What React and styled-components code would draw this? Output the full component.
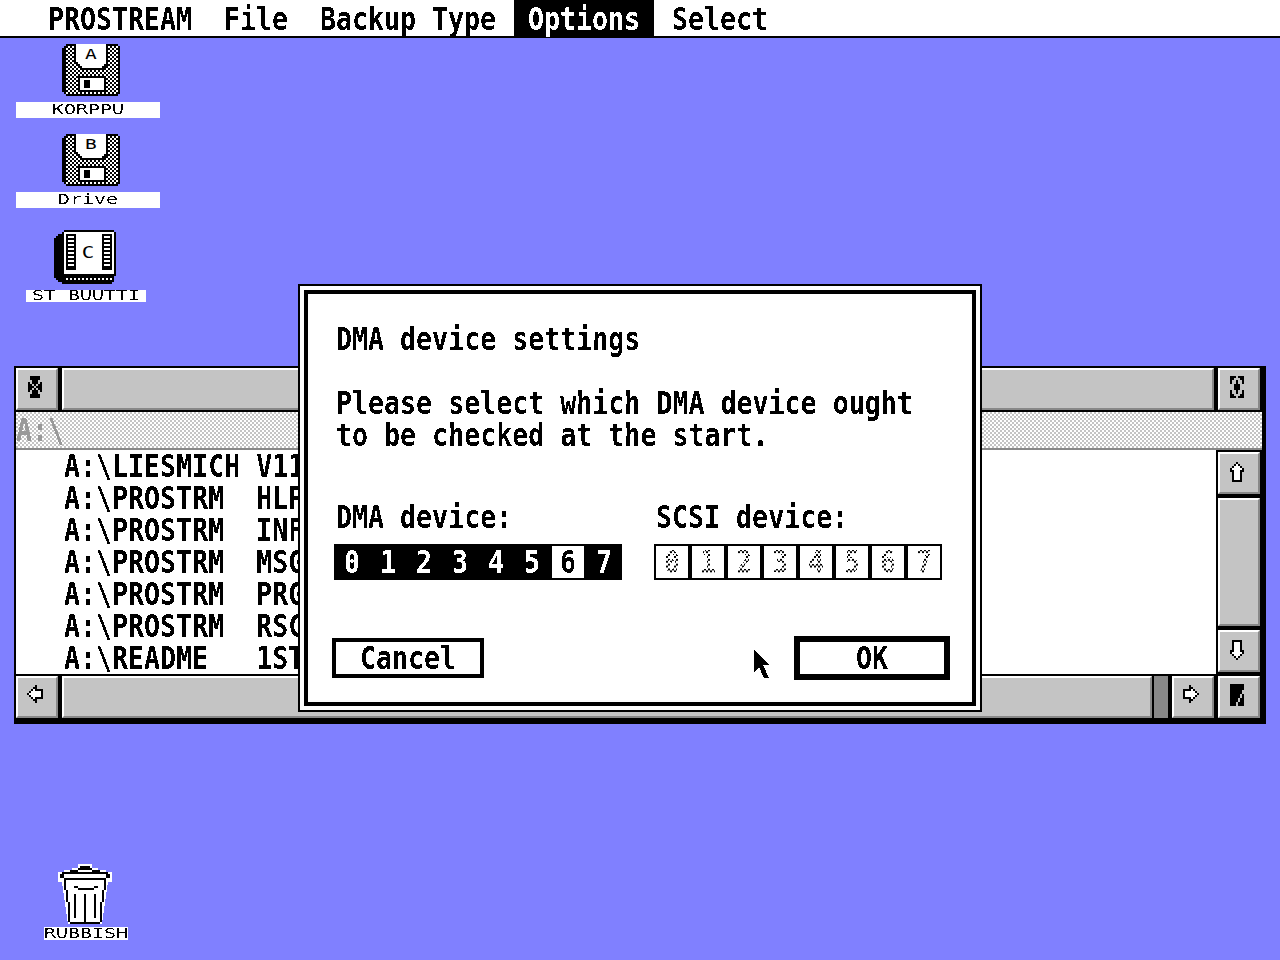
import React from "react";
import styled, { createGlobalStyle, css } from "styled-components";

const GREY = "#c4c4c4";
const DARK = "#888888";

const Global = createGlobalStyle`
  html, body {
    margin: 0;
    padding: 0;
    background: #8080ff;
  }
`;

// text is thresholded to hard edges so it reads as a 1-bit bitmap font
const systemFont = css`
  font-family: "DejaVu Sans Mono", "Liberation Mono", monospace;
  font-size: 26.6px;
  font-weight: bold;
  line-height: 26px;
  letter-spacing: 0.01px;
  white-space: pre;
  transform: scaleY(1.2);
  filter: url(#hard);
`;

const Screen = styled.div`
  width: 1280px;
  height: 960px;
  display: flex;
  flex-direction: column;
  overflow: hidden;
`;

const MenuBar = styled.div`
  height: 36px;
  flex: none;
  display: flex;
  padding-left: 32px;
  background: #fff;
  border-bottom: 2px solid #000;
`;

const MenuTitle = styled.div`
  width: ${(p) => p.$chars * 16 + 32}px;
  height: 36px;
  box-sizing: border-box;
  padding: 0 2px;
`;

const MenuInner = styled.div`
  height: 36px;
  box-sizing: border-box;
  padding-top: 1px;
  display: flex;
  justify-content: center;
  align-items: center;
  background: ${(p) => (p.$active ? "#000" : "transparent")};
`;

const MenuText = styled.span`
  ${systemFont}
  color: ${(p) => (p.$active ? "#fff" : "#000")};
`;

const Desktop = styled.div`
  position: relative;
  flex: 1;
  background: #8080ff;
`;

const DeskIcon = styled.div`
  position: absolute;
  left: ${(p) => p.$x}px;
  top: ${(p) => p.$y}px;
  width: ${(p) => p.$w}px;
  display: flex;
  flex-direction: column;
  align-items: center;
  gap: ${(p) => p.$gap}px;
  svg {
    display: block;
    margin-left: ${(p) => p.$shift}px;
    shape-rendering: crispEdges;
  }
`;

const DeskLabel = styled.div`
  width: 100%;
  height: ${(p) => p.$h}px;
  background: #fff;
  display: flex;
  justify-content: center;
  align-items: center;
`;

const DeskLabelText = styled.span`
  font-family: "DejaVu Sans Mono", monospace;
  font-size: 19.9px;
  line-height: 12px;
  color: #000;
  white-space: pre;
  transform: scaleY(0.72);
  filter: url(#hard);
`;

const Win = styled.div`
  position: absolute;
  left: 14px;
  top: 328px;
  width: 1252px;
  height: 358px;
  box-sizing: border-box;
  padding: 2px 6px 6px 2px;
  background: #000;
  display: flex;
  flex-direction: column;
`;

const WinRow = styled.div`
  height: 42px;
  flex: none;
  display: flex;
  gap: 4px;
`;

const Gadget = styled.div`
  flex: ${(p) => (p.$grow ? "1" : "none")};
  width: ${(p) => (p.$grow ? "auto" : p.$w || 42)}px;
  height: ${(p) => p.$h || 42}px;
  box-sizing: border-box;
  background: ${GREY};
  border-top: 2px solid #fff;
  border-left: 2px solid #fff;
  border-bottom: 2px solid ${DARK};
  border-right: 2px solid ${DARK};
  display: flex;
  align-items: center;
  justify-content: center;
  svg {
    display: block;
    shape-rendering: crispEdges;
    margin: 0 4px ${(p) => p.$lift ?? 4}px 0;
  }
`;

const Slider = styled.div`
  width: 14px;
  height: 42px;
  flex: none;
  margin-left: -2px;
  background: ${DARK};
`;

const InfoBar = styled.div`
  height: 38px;
  flex: none;
  box-sizing: border-box;
  margin: 2px -2px 0 0;
  padding-top: 5px;
  border-bottom: 2px solid ${DARK};
  background-color: #fff;
  background-image: conic-gradient(${GREY} 25%, #fff 0 50%, ${GREY} 0 75%, #fff 0);
  background-size: 4px 4px;
`;

const InfoText = styled.div`
  ${systemFont}
  color: #999;
  width: 60px;
`;

const WinBody = styled.div`
  height: 224px;
  flex: none;
  display: flex;
  gap: 2px;
  margin-bottom: 2px;
`;

const FileList = styled.div`
  flex: 1;
  box-sizing: border-box;
  background: #fff;
  padding: 3px 0 0 48px;
  display: flex;
  flex-direction: column;
  gap: 6px;
`;

const FileRow = styled.div`
  ${systemFont}
  height: 26px;
  color: #000;
`;

const ScrollCol = styled.div`
  width: 42px;
  flex: none;
  padding-top: 2px;
  display: flex;
  flex-direction: column;
  gap: 4px;
`;

const Dialog = styled.div`
  position: absolute;
  left: 298px;
  top: 246px;
  width: 684px;
  height: 428px;
  box-sizing: border-box;
  border: 2px solid #000;
  padding: 4px;
  background: #fff;
`;

const DialogInner = styled.div`
  height: 100%;
  box-sizing: border-box;
  border: 4px solid #000;
  padding: 32px 22px 0 28px;
`;

const Line = styled.div`
  ${systemFont}
  height: 26px;
  color: #000;
  margin-bottom: ${(p) => 6 + (p.$after || 0)}px;
`;

const Fields = styled.div`
  display: flex;
  margin-top: 56px;
`;

const Field = styled.div`
  width: 320px;
  flex: none;
`;

const DeviceBox = styled.div`
  margin: 14px 0 0 -2px;
  width: 288px;
  box-sizing: border-box;
  padding: 2px;
  background: #000;
  display: flex;
  gap: 4px;
`;

const DeviceCell = styled.div`
  width: 32px;
  height: 32px;
  background: ${(p) => (p.$on ? "#000" : "#fff")};
  display: flex;
  justify-content: center;
  align-items: center;
`;

const DeviceDigit = styled.span`
  ${systemFont}
  color: ${(p) => (p.$on ? "#fff" : "#000")};
  ${(p) =>
    p.$off &&
    css`
      mask: conic-gradient(#000 25%, transparent 0 50%, #000 0 75%, transparent 0) 0 0 / 4px 4px;
    `}
`;

const Buttons = styled.div`
  display: flex;
  justify-content: space-between;
  align-items: center;
  height: 44px;
  margin: 56px 0 0 -4px;
`;

const Button = styled.div`
  width: ${(p) => p.$w}px;
  height: ${(p) => (p.$def ? 44 : 40)}px;
  box-sizing: border-box;
  border: ${(p) => (p.$def ? 6 : 4)}px solid #000;
  background: #fff;
  display: flex;
  justify-content: center;
  align-items: center;
`;

const ButtonText = styled.span`
  ${systemFont}
  color: #000;
`;

const Pointer = styled.svg`
  position: absolute;
  left: 754px;
  top: 612px;
  shape-rendering: crispEdges;
`;

const HiddenDefs = styled.svg`
  position: absolute;
  width: 0;
  height: 0;
`;

// rows of cells, one cell is 2x2 screen pixels
const Bitmap = ({ rows }) => {
  let black = "";
  let white = "";
  rows.forEach((row, y) => {
    [...row].forEach((c, x) => {
      if (c === "#") black += `M${x} ${y}h1v1h-1z`;
      if (c === "w") white += `M${x} ${y}h1v1h-1z`;
    });
  });
  return (
    <svg width={rows[0].length * 2} height={rows.length * 2} viewBox={`0 0 ${rows[0].length} ${rows.length}`}>
      <path d={white} fill="#fff" />
      <path d={black} fill="#000" />
    </svg>
  );
};

const CLOSER = [".#####.", ".#####.", "..###..", "#.###.#", "##.#.##", "###.###", "##.#.##", "#.###.#", "..###..", ".#####.", ".#####."];
const FULLER = ["###.###", "##...##", "#..#..#", "#..#..#", "..###..", "..###..", "..###..", "#..#..#", "#..#..#", "##...##", "###.###"];
const UP = ["...#...", "..#w#..", ".#www#.", "#wwwww#", "##www##", ".#www#.", ".#www#.", ".#www#.", ".#www#.", ".#####."];
const DOWN = [...UP].reverse();
const LEFT = ["....#...", "...##...", "..#w####", ".#wwwww#", "#wwwwww#", ".#wwwww#", "..#w####", "...##...", "....#..."];
const RIGHT = LEFT.map((r) => [...r].reverse().join(""));
const SIZER = ["#######", "#######", "#######", "######.", "######.", "#####.#", "#####.#", "####.##", "####.##", "###.###", "###.###"];

const Floppy = ({ letter }) => (
  <svg width="58" height="52" viewBox="0 0 29 26">
    <defs>
      <pattern id={`check${letter}`} width="2" height="2" patternUnits="userSpaceOnUse">
        <rect width="2" height="2" fill="#000" />
        <rect width="1" height="1" fill="#fff" />
        <rect x="1" y="1" width="1" height="1" fill="#fff" />
      </pattern>
    </defs>
    <path d="M2 0h26v1h1v24h-1v1H2v-1H1v-1H0V2h1V1h1z" fill="#000" />
    <rect x="2" y="1" width="26" height="24" fill={`url(#check${letter})`} />
    <path d="M6 0h17v11h-1v1h-1v1H9v-1H8v-1H7v-1H6z" fill="#000" />
    <path d="M7 0h15v10h-1v1h-1v1H10v-1H9v-1H8V9H7z" fill="#fff" />
    <rect x="8" y="16" width="14" height="8" fill="#000" />
    <rect x="9" y="17" width="12" height="6" fill="#fff" />
    <rect x="11" y="18" width="3" height="4" fill="#000" />
    <rect x="2" y="25" width="26" height="1" fill="#000" />
    <text
      x="14.5"
      y="7.5"
      textAnchor="middle"
      fontFamily="DejaVu Sans Mono"
      fontSize="7.5"
      fill="#000"
      transform="translate(14.5 7.5) scale(1.3 0.9) translate(-14.5 -7.5)"
    >
      {letter}
    </text>
  </svg>
);

const Chip = () => (
  <svg width="62" height="54" viewBox="0 0 31 27">
    <path d="M5 0h25v1h1v22h-1v3h-1v1H4v-1H2v-1H1v-1H0V4h1V3h1V2h2V1h1z" fill="#000" />
    <rect x="5" y="1" width="25" height="21" fill="#fff" />
    <rect x="5" y="24" width="24" height="1" fill="#fff" />
    {[5, 7, 9, 11, 13, 15, 17, 19, 21, 23, 25, 27].map((x) => (
      <rect key={x} x={x} y="24" width="1" height="1" fill="#000" />
    ))}
    <rect x="6" y="2" width="5" height="18" fill="#000" />
    <rect x="24" y="2" width="5" height="18" fill="#000" />
    {[3, 5, 7, 9, 11, 13, 15, 17].map((y) => (
      <React.Fragment key={y}>
        <rect x="7" y={y} width="3" height="1" fill="#fff" />
        <rect x="25" y={y} width="3" height="1" fill="#fff" />
      </React.Fragment>
    ))}
    <text
      x="17"
      y="14"
      textAnchor="middle"
      fontFamily="DejaVu Sans Mono"
      fontSize="8"
      fill="#000"
      transform="translate(17 14) scale(1.3 1) translate(-17 -14)"
    >
      C
    </text>
  </svg>
);

const Trash = () => (
  <svg width="54" height="62" viewBox="0 0 27 31">
    <path d="M10 0h7v2h3v1h4v1h3v5h-2l-3 21H5L2 9H0V4h3V3h4V2h3z" fill="#fff" />
    <g fill="#000">
      <rect x="11" y="1" width="5" height="1" />
      <rect x="10" y="2" width="7" height="1" />
      <rect x="6" y="3" width="4" height="1" />
      <rect x="17" y="3" width="4" height="1" />
      <rect x="2" y="4" width="23" height="1" />
      <rect x="1" y="5" width="2" height="2" />
      <rect x="24" y="5" width="2" height="2" />
      <rect x="3" y="7" width="21" height="1" />
      <rect x="3" y="8" width="1" height="5" />
      <rect x="23" y="8" width="1" height="5" />
      <rect x="4" y="13" width="1" height="6" />
      <rect x="22" y="13" width="1" height="6" />
      <rect x="5" y="19" width="1" height="10" />
      <rect x="21" y="19" width="1" height="10" />
      <rect x="6" y="29" width="15" height="1" />
      <rect x="8" y="11" width="2" height="1" />
      <rect x="18" y="11" width="2" height="1" />
      <rect x="10" y="12" width="8" height="1" />
      <rect x="8" y="15" width="1" height="12" />
      <rect x="13" y="15" width="1" height="14" />
      <rect x="18" y="15" width="1" height="12" />
    </g>
  </svg>
);

const FILES = [
  "A:\\LIESMICH V11",
  "A:\\PROSTRM  HLP",
  "A:\\PROSTRM  INF",
  "A:\\PROSTRM  MSG",
  "A:\\PROSTRM  PRG",
  "A:\\PROSTRM  RSC",
  "A:\\README   1ST",
];
const MENUS = ["PROSTREAM", "File", "Backup Type", "Options", "Select"];
const DIGITS = [0, 1, 2, 3, 4, 5, 6, 7];

export default function App() {
  return (
    <Screen>
      <Global />
      <HiddenDefs aria-hidden="true">
        <filter id="hard" x="-5%" y="-5%" width="110%" height="110%" colorInterpolationFilters="sRGB">
          <feComponentTransfer>
            <feFuncA type="discrete" tableValues="0 1" />
          </feComponentTransfer>
        </filter>
      </HiddenDefs>
      <MenuBar>
        {MENUS.map((m) => (
          <MenuTitle key={m} $chars={m.length}>
            <MenuInner $active={m === "Options"}>
              <MenuText $active={m === "Options"}>{m}</MenuText>
            </MenuInner>
          </MenuTitle>
        ))}
      </MenuBar>
      <Desktop>
        <DeskIcon $x={16} $y={6} $w={144} $gap={6} $shift={6}>
          <Floppy letter="A" />
          <DeskLabel $h={16}>
            <DeskLabelText>KORPPU</DeskLabelText>
          </DeskLabel>
        </DeskIcon>
        <DeskIcon $x={16} $y={96} $w={144} $gap={6} $shift={6}>
          <Floppy letter="B" />
          <DeskLabel $h={16}>
            <DeskLabelText>Drive</DeskLabelText>
          </DeskLabel>
        </DeskIcon>
        <DeskIcon $x={26} $y={192} $w={120} $gap={6} $shift={-2}>
          <Chip />
          <DeskLabel $h={12}>
            <DeskLabelText>ST BUUTTI</DeskLabelText>
          </DeskLabel>
        </DeskIcon>
        <DeskIcon $x={44} $y={826} $w={84} $gap={1} $shift={-2}>
          <Trash />
          <DeskLabel $h={13}>
            <DeskLabelText>RUBBISH</DeskLabelText>
          </DeskLabel>
        </DeskIcon>

        <Win>
          <WinRow>
            <Gadget>
              <Bitmap rows={CLOSER} />
            </Gadget>
            <Gadget $grow />
            <Gadget>
              <Bitmap rows={FULLER} />
            </Gadget>
          </WinRow>
          <InfoBar>
            <InfoText>A:\</InfoText>
          </InfoBar>
          <WinBody>
            <FileList>
              {FILES.map((f) => (
                <FileRow key={f}>{f}</FileRow>
              ))}
            </FileList>
            <ScrollCol>
              <Gadget $lift={2}>
                <Bitmap rows={UP} />
              </Gadget>
              <Gadget $h={128} />
              <Gadget $lift={2}>
                <Bitmap rows={DOWN} />
              </Gadget>
            </ScrollCol>
          </WinBody>
          <WinRow>
            <Gadget $lift={6}>
              <Bitmap rows={LEFT} />
            </Gadget>
            <Gadget $grow />
            <Slider />
            <Gadget $lift={6}>
              <Bitmap rows={RIGHT} />
            </Gadget>
            <Gadget>
              <Bitmap rows={SIZER} />
            </Gadget>
          </WinRow>
        </Win>

        <Dialog>
          <DialogInner>
            <Line $after={32}>DMA device settings</Line>
            <Line>Please select which DMA device ought</Line>
            <Line>to be checked at the start.</Line>
            <Fields>
              <Field>
                <Line>DMA device:</Line>
                <DeviceBox>
                  {DIGITS.map((d) => (
                    <DeviceCell key={d} $on={d !== 6}>
                      <DeviceDigit $on={d !== 6}>{d}</DeviceDigit>
                    </DeviceCell>
                  ))}
                </DeviceBox>
              </Field>
              <Field>
                <Line>SCSI device:</Line>
                <DeviceBox>
                  {DIGITS.map((d) => (
                    <DeviceCell key={d}>
                      <DeviceDigit $off>{d}</DeviceDigit>
                    </DeviceCell>
                  ))}
                </DeviceBox>
              </Field>
            </Fields>
            <Buttons>
              <Button $w={152}>
                <ButtonText>Cancel</ButtonText>
              </Button>
              <Button $w={156} $def>
                <ButtonText>OK</ButtonText>
              </Button>
            </Buttons>
          </DialogInner>
        </Dialog>

        <Pointer width="16" height="28" viewBox="0 0 16 28">
          <path d="M0 0l15 15H9l6 13h-5L5 17l-5 5z" fill="#000" />
        </Pointer>
      </Desktop>
    </Screen>
  );
}
